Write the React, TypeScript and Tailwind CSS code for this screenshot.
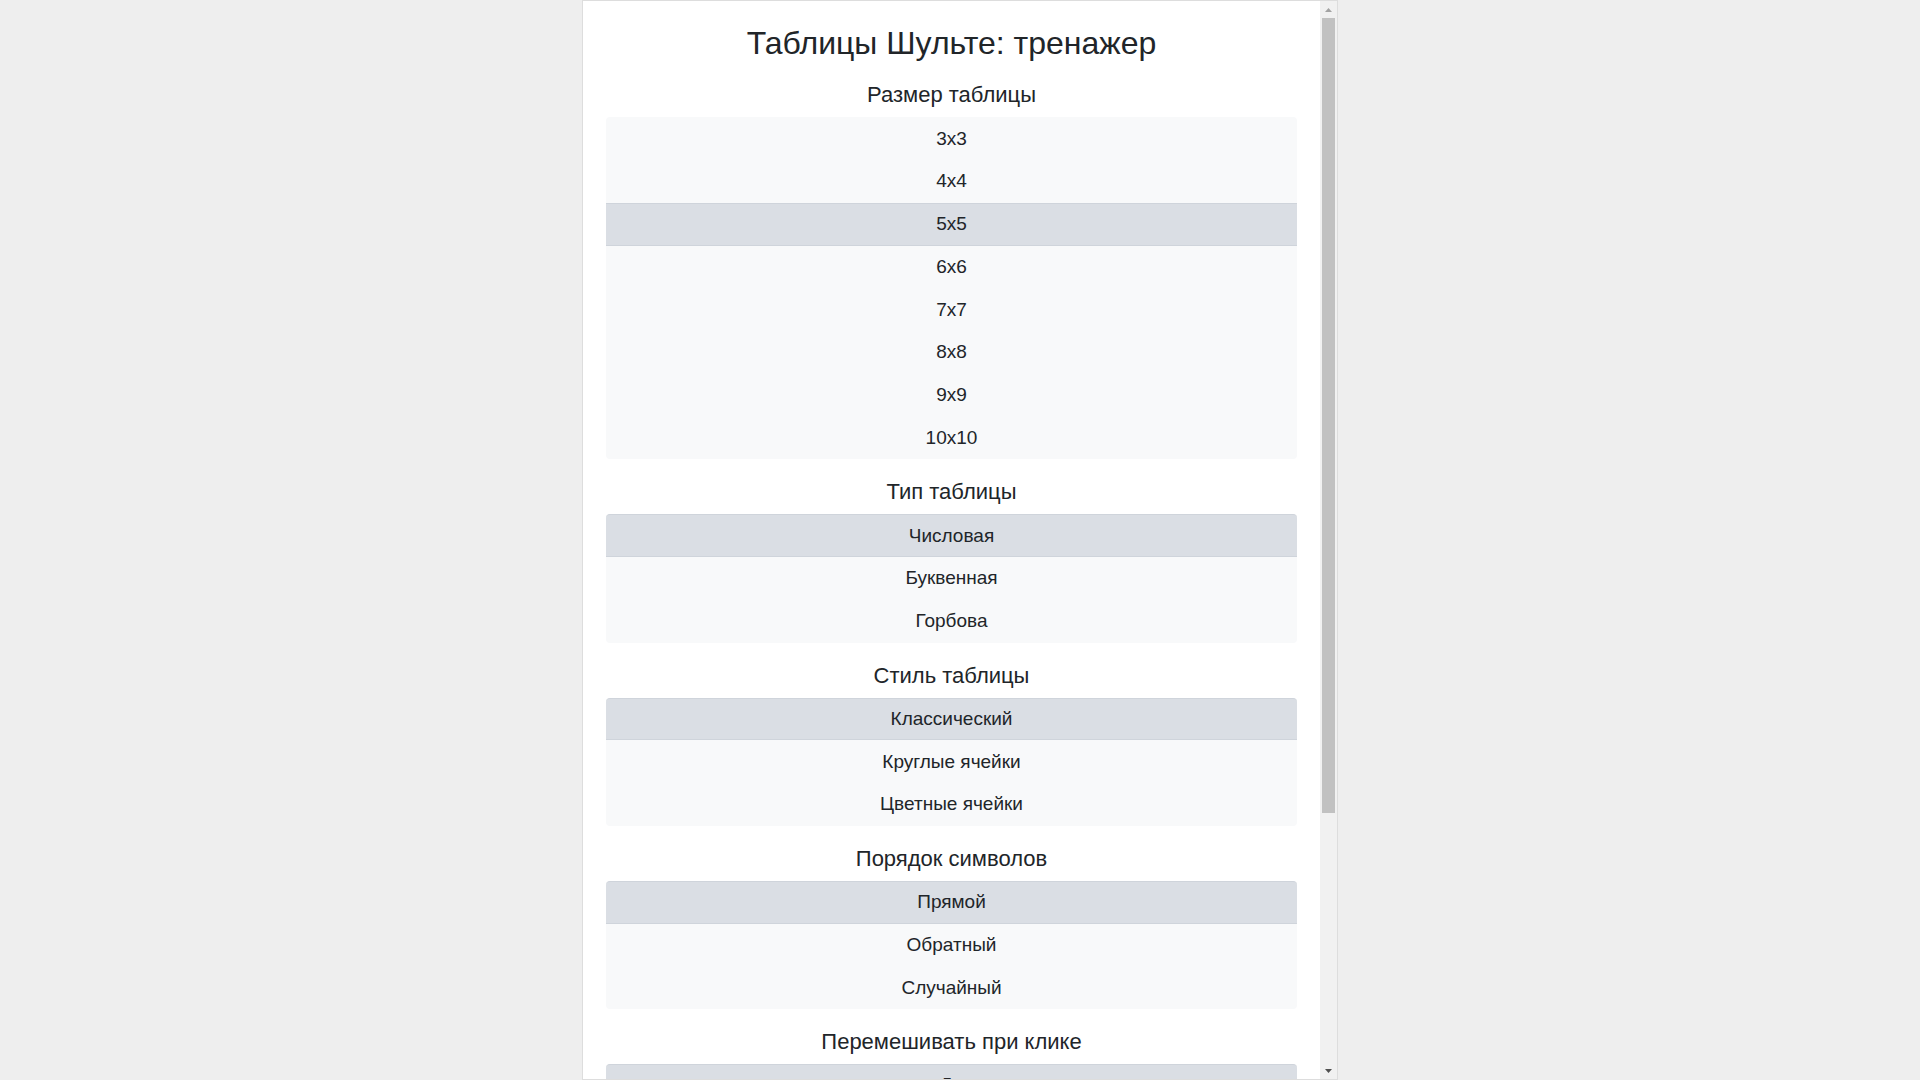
const SECTIONS = [
  { title: "Размер таблицы", options: ["3x3", "4x4", "5x5", "6x6", "7x7", "8x8", "9x9", "10x10"], active: 2 },
  { title: "Тип таблицы", options: ["Числовая", "Буквенная", "Горбова"], active: 0 },
  { title: "Стиль таблицы", options: ["Классический", "Круглые ячейки", "Цветные ячейки"], active: 0 },
  { title: "Порядок символов", options: ["Прямой", "Обратный", "Случайный"], active: 0 },
  { title: "Перемешивать при клике", options: ["Да", "Нет"], active: 0 },
];

function OptionList({ options, active }: { options: string[]; active: number }) {
  return (
    <div className="flex flex-col">
      {options.map((opt, i) => (
        <button
          key={opt}
          className={`h-[42.75px] shrink-0 flex items-center justify-center text-[19px] text-[#212529]
            ${i === 0 ? "rounded-t-[4px]" : ""}
            ${i === options.length - 1 ? "rounded-b-[4px]" : ""}
            ${i === active ? "bg-[#dadee4] border-y border-[#cfd4db]" : "bg-[#f8f9fa]"}
          `}
        >
          {opt}
        </button>
      ))}
    </div>
  );
}

function ScrollBar() {
  return (
    <div className="w-[17px] shrink-0 bg-[#f1f1f1] flex flex-col">
      <div className="h-[17px] flex items-center justify-center">
        <svg width="7" height="4" viewBox="0 0 7 4">
          <polygon points="0,4 3.5,0 7,4" fill="#a3a3a3" />
        </svg>
      </div>
      <div className="flex-1">
        <div className="h-[795px] mx-[2px] bg-[#c1c1c1]" />
      </div>
      <div className="h-[17px] flex items-center justify-center">
        <svg width="7" height="4" viewBox="0 0 7 4">
          <polygon points="0,0 7,0 3.5,4" fill="#505050" />
        </svg>
      </div>
    </div>
  );
}

export default function App() {
  return (
    <div className="min-h-screen bg-[#eeeeee] font-['Liberation_Sans',Arial,sans-serif] text-[#212529]">
      <div className="mx-auto w-[756px] h-screen flex bg-white border border-[#dddddd]">
        <div className="flex-1 overflow-hidden px-[23px] pt-[23px]">
          <h1 className="text-[32px] leading-[38.4px] text-center">Таблицы Шульте: тренажер</h1>

          {SECTIONS.map((section) => (
            <div key={section.title}>
              <h2 className="mt-[20px] mb-[9px] text-[22px] leading-[26px] text-center">{section.title}</h2>
              <OptionList options={section.options} active={section.active} />
            </div>
          ))}
        </div>
        <ScrollBar />
      </div>
    </div>
  );
}
